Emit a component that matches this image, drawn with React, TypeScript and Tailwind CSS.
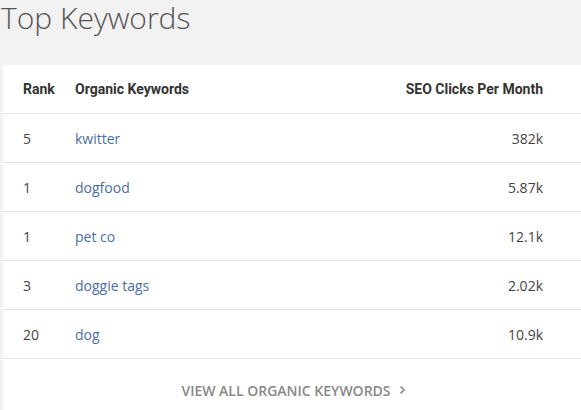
import React from "react";

interface KeywordRow {
    rank: number;
    keyword: string;
    clicks: string;
}

const rows: KeywordRow[] = [
    { rank: 5, keyword: "kwitter", clicks: "382k" },
    { rank: 1, keyword: "dogfood", clicks: "5.87k" },
    { rank: 1, keyword: "pet co", clicks: "12.1k" },
    { rank: 3, keyword: "doggie tags", clicks: "2.02k" },
    { rank: 20, keyword: "dog", clicks: "10.9k" },
];

const App: React.FC = () => {
    return (
        <div className="min-h-[410px] w-[581px] overflow-hidden bg-[#f2f2f2] font-['Open_Sans',sans-serif]">
            <h1 className="pl-[1px] pt-[1px] text-[30px] font-light leading-[34px] text-[#555]">Top Keywords</h1>
            <div className="ml-[3px] mt-[30px] w-[581px] bg-white">
                {/* header */}
                <div className="grid h-[49px] grid-cols-[52px_1fr_auto] items-center border-b border-[#e3e3e3] pl-5 pr-[41px] font-['Roboto',sans-serif] text-[14px] font-bold text-[#333]">
                    <span>Rank</span>
                    <span>Organic Keywords</span>
                    <span className="text-right">SEO Clicks Per Month</span>
                </div>
                {rows.map((row, idx) => (
                    <div key={idx} className="grid h-[49px] grid-cols-[52px_1fr_auto] items-center border-b border-[#e3e3e3] pl-5 pr-[41px] text-[14px] text-[#444]">
                        <span>{row.rank}</span>
                        <a href="#" className="text-[#4a6fa5]">{row.keyword}</a>
                        <span className="text-right">{row.clicks}</span>
                    </div>
                ))}
                {/* footer link */}
                <div className="flex h-[62px] items-center justify-center">
                    <a href="#" className="flex items-center gap-[8px] text-[14px] font-semibold uppercase text-[#888]">
                        View all organic keywords
                        <svg width="7" height="10" viewBox="0 0 7 10" fill="none" stroke="#888" strokeWidth="1.6">
                            <path d="M1.5 1.5 L5 5 L1.5 8.5" />
                        </svg>
                    </a>
                </div>
            </div>
        </div>
    );
};

export default App;
